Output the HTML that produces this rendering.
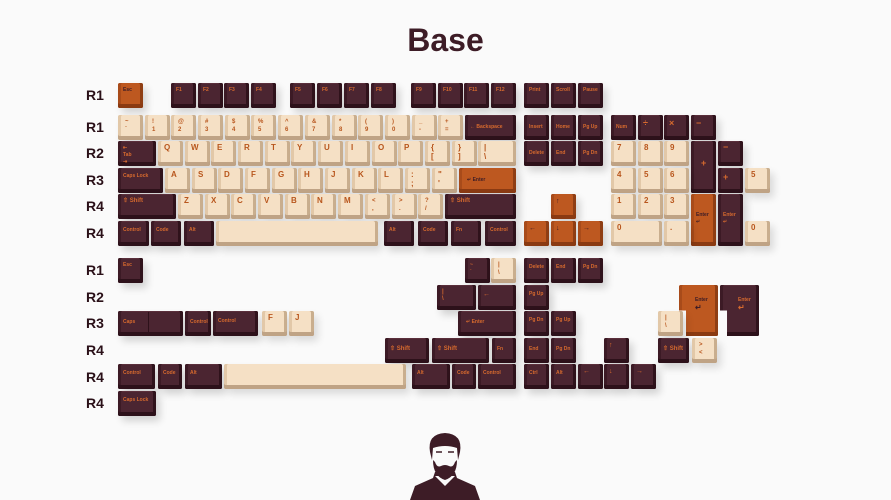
<!DOCTYPE html>
<html><head><meta charset="utf-8"><style>
body{margin:0;width:891px;height:500px;background:#fafafa;position:relative;overflow:hidden;font-family:"Liberation Sans",sans-serif}
.t{position:absolute;left:0;width:891px;top:22px;text-align:center;font:bold 32px "Liberation Sans",sans-serif;color:#3d1c26}
.r{position:absolute;left:86px;font:bold 14px "Liberation Sans",sans-serif;color:#2a1018}
.k{position:absolute;height:25px;width:25px;border-radius:2px;box-sizing:border-box;padding:4px 4px 0 5px;font:bold 5px "Liberation Sans",sans-serif;line-height:7px;white-space:nowrap;overflow:hidden}
.d{background:#4b2531;color:#d76a2e;box-shadow:inset 0 -4px 0 #2d111a,inset 3px 0 0 #3c1a25,inset -3px 0 0 #2f121b,inset 0 1px 0 #5a2f3b,4px 5px 8px rgba(0,0,0,.16)}
.c{background:#f5e0c5;color:#b8561d;box-shadow:inset 0 -4px 0 #bfa385,inset 3px 0 0 #e2c8a8,inset -3px 0 0 #c9ae8e,4px 5px 8px rgba(0,0,0,.13);font-size:8px;line-height:9px;padding:2px 0 0 6px}
.o{background:#bd5820;color:#3d1c26;box-shadow:inset 0 -4px 0 #8a3a12,inset 3px 0 0 #a84b1a,inset -3px 0 0 #8f3e14,4px 5px 8px rgba(0,0,0,.16)}
.s{font-size:6px;line-height:8px;padding:3px 0 0 7px}
</style></head><body>
<div class="t">Base</div>
<div class="r" style="top:87px">R1</div><div class="r" style="top:119px">R1</div><div class="r" style="top:145px">R2</div><div class="r" style="top:172px">R3</div><div class="r" style="top:198px">R4</div><div class="r" style="top:225px">R4</div>
<div class="r" style="top:262px">R1</div><div class="r" style="top:289px">R2</div><div class="r" style="top:315px">R3</div><div class="r" style="top:342px">R4</div><div class="r" style="top:369px">R4</div><div class="r" style="top:395px">R4</div>

<div class="k o" style="left:118px;top:83px">Esc</div>
<div class="k d" style="left:171px;top:83px">F1</div><div class="k d" style="left:198px;top:83px">F2</div><div class="k d" style="left:224px;top:83px">F3</div><div class="k d" style="left:251px;top:83px">F4</div>
<div class="k d" style="left:290px;top:83px">F5</div><div class="k d" style="left:317px;top:83px">F6</div><div class="k d" style="left:344px;top:83px">F7</div><div class="k d" style="left:371px;top:83px">F8</div>
<div class="k d" style="left:411px;top:83px">F9</div><div class="k d" style="left:438px;top:83px">F10</div><div class="k d" style="left:464px;top:83px">F11</div><div class="k d" style="left:491px;top:83px">F12</div>
<div class="k d" style="left:524px;top:83px">Print</div><div class="k d" style="left:551px;top:83px">Scroll</div><div class="k d" style="left:578px;top:83px">Pause</div>

<div class="k c s" style="left:118px;top:115px">~<br>`</div><div class="k c s" style="left:145px;top:115px">!<br>1</div><div class="k c s" style="left:171px;top:115px">@<br>2</div><div class="k c s" style="left:198px;top:115px">#<br>3</div><div class="k c s" style="left:225px;top:115px">$<br>4</div><div class="k c s" style="left:251px;top:115px">%<br>5</div><div class="k c s" style="left:278px;top:115px">^<br>6</div><div class="k c s" style="left:305px;top:115px">&amp;<br>7</div><div class="k c s" style="left:332px;top:115px">*<br>8</div><div class="k c s" style="left:358px;top:115px">(<br>9</div><div class="k c s" style="left:385px;top:115px">)<br>0</div><div class="k c s" style="left:412px;top:115px">_<br>-</div><div class="k c s" style="left:438px;top:115px">+<br>=</div>
<div class="k d" style="left:465px;top:115px;width:51px;padding-top:9px">&#8592; Backspace</div>
<div class="k d" style="left:524px;top:115px;padding-top:9px">Insert</div><div class="k d" style="left:551px;top:115px;padding-top:9px">Home</div><div class="k d" style="left:578px;top:115px;padding-top:9px">Pg Up</div>
<div class="k d" style="left:611px;top:115px;padding-top:9px">Num</div><div class="k d" style="left:638px;top:115px;font-size:9px;padding-top:5px">÷</div><div class="k d" style="left:664px;top:115px;font-size:9px;padding-top:5px">×</div><div class="k d" style="left:691px;top:115px;font-size:9px;padding-top:5px">−</div>

<div class="k d" style="left:118px;top:141px;width:38px">⇤<br>Tab<br>⇥</div>
<div class="k c" style="left:158px;top:141px">Q</div><div class="k c" style="left:185px;top:141px">W</div><div class="k c" style="left:211px;top:141px">E</div><div class="k c" style="left:238px;top:141px">R</div><div class="k c" style="left:265px;top:141px">T</div><div class="k c" style="left:291px;top:141px">Y</div><div class="k c" style="left:318px;top:141px">U</div><div class="k c" style="left:345px;top:141px">I</div><div class="k c" style="left:372px;top:141px">O</div><div class="k c" style="left:398px;top:141px">P</div><div class="k c" style="left:425px;top:141px">{<br>[</div><div class="k c" style="left:452px;top:141px">}<br>]</div>
<div class="k c" style="left:478px;top:141px;width:38px">|<br>\</div>
<div class="k d" style="left:524px;top:141px;padding-top:9px">Delete</div><div class="k d" style="left:551px;top:141px;padding-top:9px">End</div><div class="k d" style="left:578px;top:141px;padding-top:9px">Pg Dn</div>
<div class="k c" style="left:611px;top:141px">7</div><div class="k c" style="left:638px;top:141px">8</div><div class="k c" style="left:664px;top:141px">9</div>
<div class="k d" style="left:691px;top:141px;height:52px;font-size:9px;padding-top:19px;padding-left:10px">+</div>
<div class="k d" style="left:718px;top:141px;font-size:9px;padding-top:3px">−</div>

<div class="k d" style="left:118px;top:168px;width:45px;padding-top:5px">Caps Lock</div>
<div class="k c" style="left:165px;top:168px">A</div><div class="k c" style="left:192px;top:168px">S</div><div class="k c" style="left:218px;top:168px">D</div><div class="k c" style="left:245px;top:168px">F</div><div class="k c" style="left:272px;top:168px">G</div><div class="k c" style="left:298px;top:168px">H</div><div class="k c" style="left:325px;top:168px">J</div><div class="k c" style="left:352px;top:168px">K</div><div class="k c" style="left:378px;top:168px">L</div><div class="k c" style="left:405px;top:168px">:<br>;</div><div class="k c" style="left:432px;top:168px">"<br>'</div>
<div class="k o" style="left:459px;top:168px;width:57px;padding-top:9px;padding-left:8px">&#8629; Enter</div>
<div class="k c" style="left:611px;top:168px">4</div><div class="k c" style="left:638px;top:168px">5</div><div class="k c" style="left:664px;top:168px">6</div>
<div class="k d" style="left:718px;top:168px;font-size:9px;padding-top:6px">+</div>
<div class="k c" style="left:745px;top:168px">5</div>

<div class="k d" style="left:118px;top:194px;width:58px;font-size:6px">⇧ Shift</div>
<div class="k c" style="left:178px;top:194px">Z</div><div class="k c" style="left:205px;top:194px">X</div><div class="k c" style="left:231px;top:194px">C</div><div class="k c" style="left:258px;top:194px">V</div><div class="k c" style="left:285px;top:194px">B</div><div class="k c" style="left:311px;top:194px">N</div><div class="k c" style="left:338px;top:194px">M</div><div class="k c s" style="left:365px;top:194px">&lt;<br>,</div><div class="k c s" style="left:392px;top:194px">&gt;<br>.</div><div class="k c s" style="left:418px;top:194px">?<br>/</div>
<div class="k d" style="left:445px;top:194px;width:71px;font-size:6px">⇧ Shift</div>
<div class="k o" style="left:551px;top:194px;font-size:7px">↑</div>
<div class="k c" style="left:611px;top:194px">1</div><div class="k c" style="left:638px;top:194px">2</div><div class="k c" style="left:664px;top:194px">3</div>
<div class="k o" style="left:691px;top:194px;height:52px;padding-top:18px">Enter<br>&#8629;</div>
<div class="k d" style="left:718px;top:194px;height:52px;padding-top:18px">Enter<br>&#8629;</div>

<div class="k d" style="left:118px;top:221px;width:31px;padding-top:6px">Control</div>
<div class="k d" style="left:151px;top:221px;width:30px;padding-top:6px">Code</div>
<div class="k d" style="left:184px;top:221px;width:30px;padding-top:6px">Alt</div>
<div class="k c" style="left:216px;top:221px;width:162px"></div>
<div class="k d" style="left:384px;top:221px;width:30px;padding-top:6px">Alt</div>
<div class="k d" style="left:418px;top:221px;width:30px;padding-top:6px">Code</div>
<div class="k d" style="left:451px;top:221px;width:30px;padding-top:6px">Fn</div>
<div class="k d" style="left:485px;top:221px;width:31px;padding-top:6px">Control</div>
<div class="k o" style="left:524px;top:221px;font-size:7px">←</div><div class="k o" style="left:551px;top:221px;font-size:7px">↓</div><div class="k o" style="left:578px;top:221px;font-size:7px">→</div>
<div class="k c" style="left:611px;top:221px;width:51px">0</div><div class="k c" style="left:664px;top:221px">.</div>
<div class="k c" style="left:745px;top:221px">0</div>

<div class="k d" style="left:118px;top:258px">Esc</div>
<div class="k d" style="left:465px;top:258px">~<br>`</div><div class="k c s" style="left:491px;top:258px">|<br>\</div>
<div class="k d" style="left:524px;top:258px;padding-top:6px">Delete</div><div class="k d" style="left:551px;top:258px;padding-top:6px">End</div><div class="k d" style="left:578px;top:258px;padding-top:6px">Pg Dn</div>

<div class="k d" style="left:437px;top:285px;width:39px;font-size:6px">|<br>\</div>
<div class="k d" style="left:478px;top:285px;width:38px;font-size:7px;padding-top:6px">←</div>
<div class="k d" style="left:524px;top:285px;padding-top:6px">Pg Up</div>
<div class="k o" style="left:679px;top:285px;width:39px;height:51px;clip-path:polygon(0 0,100% 0,100% 100%,18% 100%,18% 50%,0 50%);padding:12px 0 0 16px">Enter<br><span style="font-size:8px">&#8629;</span></div>
<div class="k d" style="left:720px;top:285px;width:39px;height:51px;clip-path:polygon(0 0,100% 0,100% 100%,18% 100%,18% 50%,0 50%);padding:12px 0 0 18px">Enter<br><span style="font-size:8px">&#8629;</span></div>
<div class="k c s" style="left:658px;top:311px">|<br>\</div>

<div class="k d" style="left:118px;top:311px;width:65px;padding-top:8px">Caps</div>
<div style="position:absolute;left:148px;top:312px;width:1px;height:20px;background:#2d111a"></div>
<div class="k d" style="left:185px;top:311px;width:26px;padding-top:8px">Control</div>
<div class="k d" style="left:213px;top:311px;width:45px;padding-top:7px">Control</div>
<div class="k c" style="left:262px;top:311px">F</div><div class="k c" style="left:289px;top:311px">J</div>
<div class="k d" style="left:458px;top:311px;width:58px;padding-top:8px;padding-left:8px">&#8629; Enter</div>
<div class="k d" style="left:524px;top:311px;padding-top:6px">Pg Dn</div><div class="k d" style="left:551px;top:311px;padding-top:6px">Pg Up</div>

<div class="k d" style="left:385px;top:338px;width:44px;font-size:6px;padding-top:8px">⇧ Shift</div>
<div class="k d" style="left:432px;top:338px;width:57px;font-size:6px;padding-top:8px">⇧ Shift</div>
<div class="k d" style="left:492px;top:338px;width:24px;padding-top:8px">Fn</div>
<div class="k d" style="left:524px;top:338px;padding-top:8px">End</div><div class="k d" style="left:551px;top:338px;padding-top:8px">Pg Dn</div>
<div class="k d" style="left:604px;top:338px;font-size:7px">↑</div>
<div class="k d" style="left:658px;top:338px;width:31px;font-size:6px;padding-top:8px">⇧ Shift</div>
<div class="k c s" style="left:692px;top:338px">&gt;<br>&lt;</div>

<div class="k d" style="left:118px;top:364px;width:37px;padding-top:6px">Control</div>
<div class="k d" style="left:158px;top:364px;width:24px;padding-top:6px">Code</div>
<div class="k d" style="left:185px;top:364px;width:37px;padding-top:6px">Alt</div>
<div class="k c" style="left:224px;top:364px;width:182px"></div>
<div class="k d" style="left:412px;top:364px;width:38px;padding-top:6px">Alt</div>
<div class="k d" style="left:452px;top:364px;width:24px;padding-top:6px">Code</div>
<div class="k d" style="left:478px;top:364px;width:38px;padding-top:6px">Control</div>
<div class="k d" style="left:524px;top:364px;padding-top:6px">Ctrl</div><div class="k d" style="left:551px;top:364px;padding-top:6px">Alt</div>
<div class="k d" style="left:578px;top:364px;font-size:7px">←</div><div class="k d" style="left:604px;top:364px;font-size:7px">↓</div><div class="k d" style="left:631px;top:364px;font-size:7px">→</div>

<div class="k d" style="left:118px;top:391px;width:38px;padding-top:6px">Caps Lock</div>

<svg style="position:absolute;left:405px;top:430px" width="80" height="70" viewBox="0 0 80 70">
<path d="M5 70 L10 56 L28 48 L30 42 L50 42 L52 48 L70 56 L75 70 Z" fill="#3d1c26"/>
<path d="M30 46 L40 56 L50 46 Z" fill="#fafafa"/>
<path d="M25 22 Q22 4 40 3 Q58 4 55 22 L53 30 L52 18 Q40 14 28 18 L27 30 Z" fill="#3d1c26"/>
<path d="M28 30 Q28 46 40 50 Q52 46 52 30 L50 32 Q48 38 44 36 Q40 34 36 36 Q32 38 30 32 Z" fill="#3d1c26"/>
<path d="M31 22 L37 22 M43 22 L49 22" stroke="#3d1c26" stroke-width="1.5"/>
</svg>
</body></html>
